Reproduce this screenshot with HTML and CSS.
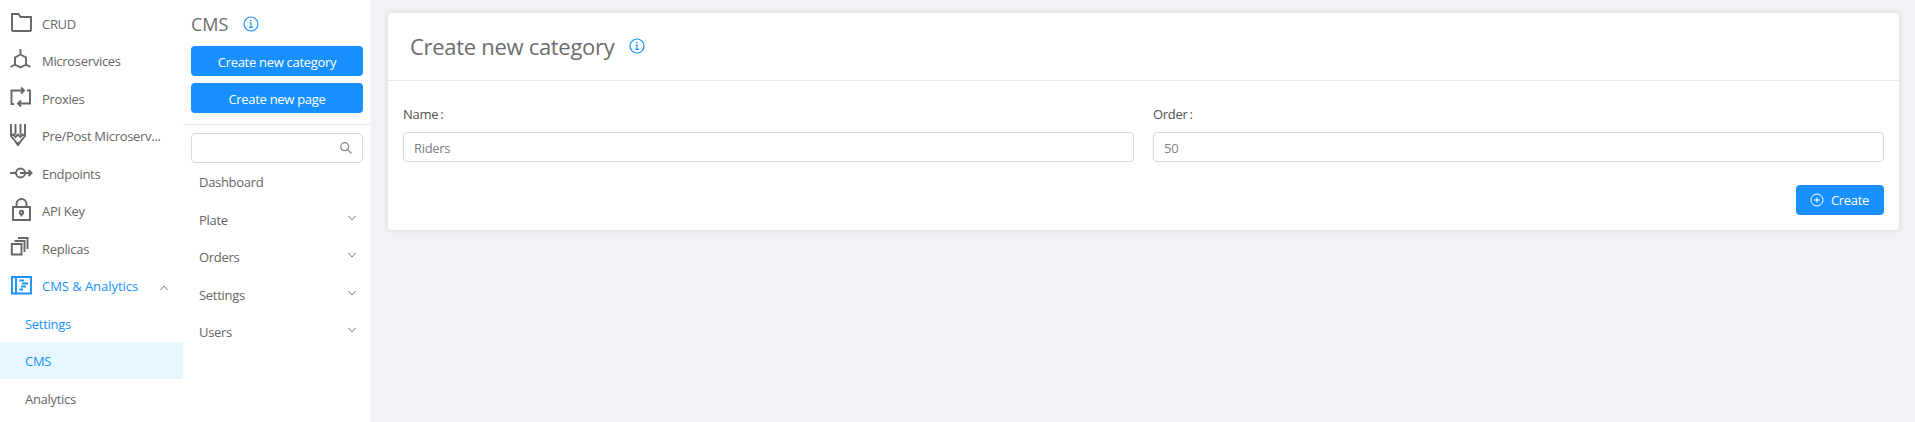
FILE: index.html
```html
<!DOCTYPE html>
<html lang="en">
<head>
<meta charset="utf-8">
<title>CMS</title>
<link rel="stylesheet" href="styles.css">
</head>
<body>
<div class="app">
  <nav class="sidebar">
    <a class="nav-item"><svg class="nav-icon" viewBox="0 0 24 24"><path d="M2 3V19a1 1 0 0 0 1 1H20a1 1 0 0 0 1-1V6H10.500L8.500 3Z"/></svg><span>CRUD</span></a>
    <a class="nav-item"><svg class="nav-icon" viewBox="0 0 24 24"><path d="M10.500 1V6.500M10.500 6.500L16 9.500V16.500L10.500 19.500L5 16.500V9.500ZM5 16.500L.5 19M16 16.500L20.500 19"/></svg><span>Microservices</span></a>
    <a class="nav-item"><svg class="nav-icon" viewBox="0 0 24 24"><path d="M4 18H1.500V4.500H14M11 1.500L14 4.500L11 7.500M17 4.500H20V17.500H8M11 14.500L8 17.500L11 20.500"/></svg><span>Proxies</span></a>
    <a class="nav-item"><svg class="nav-icon" viewBox="0 0 24 24"><path d="M1 1V13L8 21.500L15 13V1M5.500 1V11.500M10.500 1V11.500M1 12.500L3.500 11.500L5.500 14L8 11.500L10.500 14L12.500 11.500L15 12.500"/><path d="M6.500 20H9.500L8 22Z" class="solid"/></svg><span>Pre/Post Microserv...</span></a>
    <a class="nav-item"><svg class="nav-icon" viewBox="0 0 24 24"><circle cx="10.500" cy="12" r="4.500"/><path d="M0 12H6M10 12H21.500M18.500 9L21.500 12L18.500 15"/></svg><span>Endpoints</span></a>
    <a class="nav-item"><svg class="nav-icon" viewBox="0 0 24 24"><path d="M3 9H20V22H3ZM6.500 9V6A5 5 0 0 1 16.500 6V9M11.500 16V18.500"/><circle cx="11.500" cy="14.500" r="1.700"/></svg><span>API Key</span></a>
    <a class="nav-item"><svg class="nav-icon" viewBox="0 0 24 24"><path d="M1.800 8H11.500V18.500H1.800ZM4.500 5H14.500V16M8 2H17.500V13"/></svg><span>Replicas</span></a>
    <a class="nav-item active"><svg class="nav-icon" viewBox="0 0 24 24"><path d="M2 4H21V20.500H2ZM6 4V20.500M9.500 7.500H14M12 10.500H18M11 13.500H16M9.500 16.500H13"/></svg><span class="loose">CMS &amp; Analytics</span><svg class="caret" viewBox="0 0 8 6"><path d="M.5 5L4 1L7.500 5"/></svg></a>
    <a class="nav-item sub active"><span>Settings</span></a>
    <a class="nav-item sub active selected"><span>CMS</span></a>
    <a class="nav-item sub"><span>Analytics</span></a>
  </nav>
  <aside class="panel">
    <div class="panel-top">
      <h2 class="panel-title">CMS <svg class="info" viewBox="0 0 16 16"><circle cx="8" cy="8" r="7"/><path d="M6.500 7H8V11M6 11.300H10"/><path d="M7 4.700H8.500"/></svg></h2>
      <button class="btn wide">Create new category</button>
      <button class="btn wide">Create new page</button>
    </div>
    <div class="panel-body">
      <div class="field search"><svg class="lens" viewBox="0 0 12 12"><circle cx="4.700" cy="4.700" r="4"/><path d="M7.600 7.600L11.500 11.500"/></svg></div>
      <a class="page-item"><span>Dashboard</span></a>
      <a class="page-item"><span>Plate</span><svg class="caret" viewBox="0 0 8 6"><path d="M.5 1L4 5L7.500 1"/></svg></a>
      <a class="page-item"><span>Orders</span><svg class="caret" viewBox="0 0 8 6"><path d="M.5 1L4 5L7.500 1"/></svg></a>
      <a class="page-item"><span>Settings</span><svg class="caret" viewBox="0 0 8 6"><path d="M.5 1L4 5L7.500 1"/></svg></a>
      <a class="page-item"><span>Users</span><svg class="caret" viewBox="0 0 8 6"><path d="M.5 1L4 5L7.500 1"/></svg></a>
    </div>
  </aside>
  <main class="content">
    <section class="card">
      <h1 class="card-head"><span>Create new category</span><svg class="info" viewBox="0 0 16 16"><circle cx="8" cy="8" r="7"/><path d="M6.500 7H8V11M6 11.300H10"/><path d="M7 4.700H8.500"/></svg></h1>
      <div class="form">
        <div class="group"><label class="label">Name<span class="colon">:</span></label><div class="field"><span>Riders</span></div></div>
        <div class="group"><label class="label">Order<span class="colon">:</span></label><div class="field"><span>50</span></div></div>
      </div>
      <div class="actions"><button class="btn create"><svg class="plus" viewBox="0 0 14 14"><circle cx="7" cy="7" r="6"/><path d="M4.300 7H9.700M7 4.300V9.700"/></svg>Create</button></div>
    </section>
  </main>
</div>
</body>
</html>
```
FILE: styles.css
```css
* { box-sizing: border-box; }
body { margin: 0; background: #f0f2f5; font: 13px/20px "Open Sans", "Noto Sans", sans-serif; color: #666; letter-spacing: -0.3px; }
svg { fill: none; stroke: currentColor; flex: none; display: block; }
.app { display: flex; height: 422px; overflow: hidden; }
.sidebar { width: 183px; background: #fff; padding-top: 4px; flex: none; }
.nav-item { height: 37.5px; display: flex; align-items: center; padding-left: 10px; white-space: nowrap; }
.nav-icon { width: 24px; height: 24px; stroke-width: 1.9; margin-right: 8px; color: #666; overflow: visible; }
.solid { fill: currentColor; }
.nav-item span { padding-top: 2px; }
.nav-item .loose { letter-spacing: -0.05px; }
.active, .active .nav-icon { color: #1890ff; }
.sub { padding-left: 25px; }
.selected { background: #e6f7ff; }
.caret { width: 8px; height: 6px; color: #777; margin: 0 0 4px auto; }
.nav-item .caret { margin: 5px 15px 0 auto; }
.panel { width: 188px; background: #fff; flex: none; }
.panel-top { height: 125px; padding: 9px 8px 0; border-bottom: 1px solid #e8e8e8; display: flex; flex-direction: column; gap: 7px; }
.panel-title { display: flex; align-items: center; gap: 15px; height: 30px; margin: 0; font-size: 18px; font-weight: 400; color: #6c6c6c; letter-spacing: 0; }
.info { width: 16px; height: 16px; color: #1890ff; stroke-width: 1.2; }
.btn { height: 30px; border: 0; border-radius: 4px; background: #1890ff; color: #fff; font: inherit; letter-spacing: -0.3px; padding: 1px 0 0; }
.panel-body { padding: 8px 8px 0; }
.field { height: 30px; border: 1px solid #d9d9d9; border-radius: 4px; background: #fff; display: flex; align-items: center; padding: 2px 10px 0; color: #808080; }
.search { justify-content: flex-end; padding-top: 0; margin-bottom: 0.5px; }
.lens { width: 12px; height: 12px; color: #888; stroke-width: 1.2; }
.page-item { height: 37.5px; display: flex; align-items: center; padding: 0 7px 0 8px; }
.content { flex: 1; padding: 13px 16px 0 17px; }
.card { height: 217px; background: #fff; border-radius: 4px; box-shadow: 0 0 5px 1px #ddd; }
.card-head { height: 68px; border-bottom: 1px solid #e8e8e8; margin: 0; padding: 0 0 1px 22px; display: flex; align-items: center; gap: 15px; font-size: 22px; font-weight: 400; color: #6c6c6c; }
.form { display: grid; grid-template-columns: 1fr 1fr; gap: 19px; padding: 23px 15px 0; }
.label { display: block; height: 28px; color: #505050; }
.colon { margin-left: 2px; }
.actions { display: flex; justify-content: flex-end; padding: 23px 15px 0; }
.create { width: 88px; display: flex; align-items: center; justify-content: center; gap: 7px; padding: 0 1px 0 0; }
.plus { width: 14px; height: 14px; }
```
